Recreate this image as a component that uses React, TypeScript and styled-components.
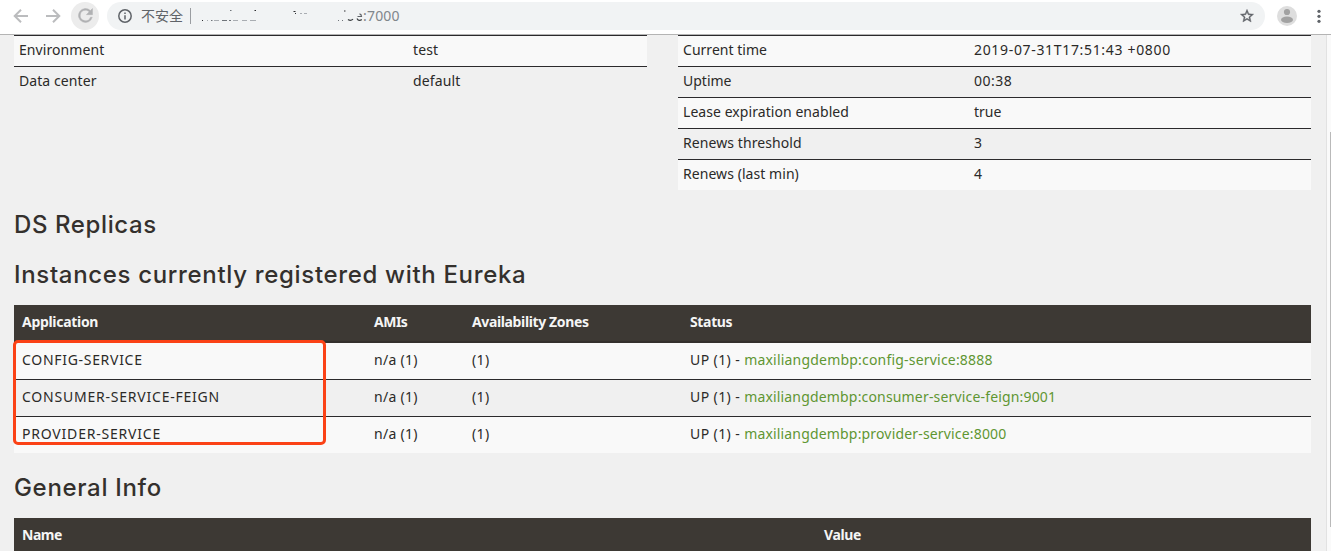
import React from "react";
import styled, { createGlobalStyle } from "styled-components";

const Global = createGlobalStyle`
  * { box-sizing: border-box; }
  body { margin: 0; background: #f0f0f0; overflow: hidden; }
`;

const Page = styled.div`
  height: 551px;
  display: flex;
  flex-direction: column;
  overflow: hidden;
  background: #f0f0f0;
  color: #2b2a28;
  font: 14px/20px "Noto Sans", "Open Sans", sans-serif;
`;

const Toolbar = styled.header`
  flex: none;
  height: 35px;
  display: flex;
  align-items: center;
  padding: 0 0 3px 12px;
  background: #fff;
  border-bottom: 1px solid #b4b4b4;
`;

const NavIcon = styled.svg`
  flex: none;
  width: 18px;
  height: 18px;
  margin-right: 14px;
`;

const ReloadButton = styled.button`
  flex: none;
  width: 28px;
  height: 28px;
  margin: 0 8px 0 -5px;
  padding: 0;
  display: grid;
  place-items: center;
  border: 0;
  border-radius: 50%;
  background: #ececec;
`;

const AddressBar = styled.div`
  flex: none;
  width: 1158px;
  height: 28px;
  display: flex;
  align-items: center;
  padding: 0 10px;
  border-radius: 14px;
  background: #f1f3f4;
  color: #5f6368;
  font: 14px/28px "Noto Sans", "Noto Sans CJK SC", sans-serif;
`;

const Security = styled.span`
  margin: 0 7px 0 8px;
`;

const Divider = styled.i`
  width: 1px;
  height: 16px;
  background: #9a9da1;
`;

const Residue = styled.svg`
  width: 162px;
  height: 16px;
  margin-left: 10px;
`;

const Port = styled.span`
  flex: 1;
  color: #80868b;
  letter-spacing: 0.2px;
`;

const Avatar = styled.svg`
  flex: none;
  width: 20px;
  height: 20px;
  margin-left: 12px;
`;

const MenuDots = styled.svg`
  flex: none;
  width: 4px;
  height: 16px;
  margin-left: 20px;
`;

const Body = styled.div`
  flex: 1;
  min-height: 0;
  display: flex;
`;

const Content = styled.main`
  flex: none;
  width: 1327px;
  padding: 0 15px 0 14px;
  border-right: 1px solid #e2e2e2;
`;

const ScrollTrack = styled.aside`
  flex: 1;
  display: flex;
  justify-content: flex-end;
  padding-top: 97px;
  background: #fafafa;
`;

const ScrollThumb = styled.div`
  width: 1px;
  height: 395px;
  background: #b9b9b9;
`;

const StatusGrid = styled.section`
  display: grid;
  grid-template-columns: 633px 633px;
  column-gap: 31px;
  align-items: start;
  height: 155px;
`;

const StatusRow = styled.div<{ $label: number }>`
  display: grid;
  grid-template-columns: ${(p) => p.$label}px 1fr;
  height: 31px;
  padding: 4px 5px;
  border-top: 1px solid #2b2a2c;
  &:nth-child(odd) { background: #f9f9f9; }
`;

const Title = styled.h1<{ $track?: number }>`
  margin: 0;
  height: 30px;
  font: 500 24px/30px Inter, sans-serif;
  letter-spacing: ${(p) => p.$track ?? 0.67}px;
  color: #34302d;
  white-space: nowrap;
`;

const Headings = styled.section`
  display: grid;
  gap: 20px;
  padding: 20px 0 15px;
`;

const GeneralHeading = styled.section`
  padding: 20px 0 15px;
`;

const Text = styled.span<{ $track?: number }>`
  letter-spacing: ${(p) => p.$track ?? 0}px;
  white-space: nowrap;
`;

const Instances = styled.section`
  position: relative;
  height: 148px;
`;

const HeadRow = styled.div<{ $cols: string }>`
  display: grid;
  grid-template-columns: ${(p) => p.$cols};
  height: 38px;
  padding: 7px 8px;
  border-bottom: 2px solid #34302d;
  background: #3d3934;
  color: #f5f5f5;
  font-weight: 700;
`;

const InstanceRow = styled.div`
  display: grid;
  grid-template-columns: 352px 98px 218px 1fr;
  height: 37px;
  padding: 7px 8px;
  border-bottom: 1px solid #2b2a2c;
  background: #f9f9f9;
  &:nth-child(odd) { background: #f0f0f0; }
  &:last-of-type { border-bottom: 0; height: 36px; }
`;

const Link = styled.a<{ $track?: number }>`
  color: #5f9632;
  letter-spacing: ${(p) => p.$track ?? 0}px;
`;

const Highlight = styled.i`
  position: absolute;
  left: -1px;
  top: 35px;
  width: 313px;
  height: 105px;
  border: 3px solid #fb4216;
  border-radius: 5px;
`;

type Item = { label: string; value: string; lt?: number; vt?: number };

const environment: Item[] = [
  { label: "Environment", value: "test", lt: 0.08, vt: 0.15 },
  { label: "Data center", value: "default", lt: 0.08, vt: 0.15 },
];

const runtime: Item[] = [
  { label: "Current time", value: "2019-07-31T17:51:43 +0800", lt: 0.03, vt: 0.67 },
  { label: "Uptime", value: "00:38", vt: 0.5 },
  { label: "Lease expiration enabled", value: "true", lt: 0.06 },
  { label: "Renews threshold", value: "3", lt: 0.08 },
  { label: "Renews (last min)", value: "4", lt: 0.06 },
];

const instances = [
  { name: "CONFIG-SERVICE", link: "maxiliangdembp:config-service:8888", nt: 0.7, lt: 0.2 },
  { name: "CONSUMER-SERVICE-FEIGN", link: "maxiliangdembp:consumer-service-feign:9001", nt: 0.78, lt: 0.17 },
  { name: "PROVIDER-SERVICE", link: "maxiliangdembp:provider-service:8000", nt: 0.8, lt: 0.17 },
];

function StatusTable({ items, label }: { items: Item[]; label: number }) {
  return (
    <div>
      {items.map((i) => (
        <StatusRow key={i.label} $label={label}>
          <Text $track={i.lt}>{i.label}</Text>
          <Text $track={i.vt}>{i.value}</Text>
        </StatusRow>
      ))}
    </div>
  );
}

function BrowserBar() {
  return (
    <Toolbar>
      <NavIcon viewBox="0 0 18 18" fill="none" stroke="#bbbcbe" strokeWidth="2">
        <path d="M16 9H3.5M9 2.7L2.7 9 9 15.3" />
      </NavIcon>
      <NavIcon viewBox="0 0 18 18" fill="none" stroke="#bbbcbe" strokeWidth="2">
        <path d="M2 9h12.5M9 2.7L15.3 9 9 15.3" />
      </NavIcon>
      <ReloadButton aria-label="Reload">
        <svg width="21" height="21" viewBox="0 0 24 24" fill="#b0b1b3" stroke="#b0b1b3" strokeWidth="0.5">
          <path d="M17.65 6.35A8 8 0 1 0 19.73 14h-2.08A6 6 0 1 1 12 6c1.66 0 3.14.69 4.22 1.78L13 11h7V4z" />
        </svg>
      </ReloadButton>
      <AddressBar>
        <svg width="16" height="16" viewBox="0 0 16 16" fill="none" stroke="#5f6368" strokeWidth="1.5">
          <circle cx="8" cy="8" r="6.2" />
          <path d="M8 7.2v4.2M8 4.4v1.6" />
        </svg>
        <Security>不安全</Security>
        <Divider />
        <Residue viewBox="201 8 162 16" fill="none" stroke="#a9adb2">
          <path d="M207 20.5h1M214 20.5h5M233 20.5h5M242 20.5h5M250 20.5h6M300 13.5h2M304 13.5h3" />
          <path stroke="#6f747a" d="M211 20.5h1.500M222 20.5h5M229 20.5h2M230 10.500h1.500M338 20.5h1M342 20.5h1" />
          <path stroke="#2c2d30" d="M202 20.5h1M254.500 10.500h1.500M293.500 11.500h2M344 11h1.500M295 13.500h1" />
          <path stroke="#3c4043" strokeWidth="1.200" d="M348 19.500c1.500 1.200 3.500 1.200 5-.3M357 18.500c.8 2 3 2.500 4.800 1" />
          <path stroke="#5f6368" strokeWidth="1.200" d="M357.500 16.500h4c0-1.500-.8-2.500-2-2.700" />
        </Residue>
        <Port>:7000</Port>
        <svg width="16" height="16" viewBox="0 0 24 24" fill="#5f6368" stroke="#5f6368" strokeWidth="0.6">
          <path d="M22 9.24l-7.19-.62L12 2 9.19 8.63 2 9.24l5.46 4.73L5.82 21 12 17.27 18.18 21l-1.63-7.03L22 9.24zM12 15.4l-3.76 2.27 1-4.28-3.32-2.88 4.38-.38L12 6.1l1.71 4.04 4.38.38-3.32 2.88 1 4.28L12 15.4z" />
        </svg>
      </AddressBar>
      <Avatar viewBox="0 0 20 20">
        <circle cx="10" cy="10" r="10" fill="#dedede" />
        <circle cx="10" cy="6" r="3.100" fill="#a2a2a2" />
        <ellipse cx="10" cy="13.800" rx="6" ry="3.200" fill="#a2a2a2" />
      </Avatar>
      <MenuDots viewBox="0 0 4 16" fill="#5f6368">
        <circle cx="2" cy="3.300" r="1.600" />
        <circle cx="2" cy="8.300" r="1.600" />
        <circle cx="2" cy="13.300" r="1.600" />
      </MenuDots>
    </Toolbar>
  );
}

export default function App() {
  return (
    <Page>
      <Global />
      <BrowserBar />
      <Body>
        <Content>
          <StatusGrid>
            <StatusTable items={environment} label={394} />
            <StatusTable items={runtime} label={291} />
          </StatusGrid>
          <Headings>
            <Title $track={0.6}>DS Replicas</Title>
            <Title>Instances currently registered with Eureka</Title>
          </Headings>
          <Instances>
            <HeadRow $cols="352px 98px 218px 1fr">
              <Text $track={-0.3}>Application</Text>
              <Text $track={-0.5}>AMIs</Text>
              <Text $track={-0.37}>Availability Zones</Text>
              <Text $track={-0.35}>Status</Text>
            </HeadRow>
            {instances.map((i) => (
              <InstanceRow key={i.name}>
                <Text $track={i.nt}>{i.name}</Text>
                <Text $track={0.3}>n/a (1)</Text>
                <Text $track={0.4}>(1)</Text>
                <Text $track={0.4}>UP (1) - <Link $track={i.lt}>{i.link}</Link></Text>
              </InstanceRow>
            ))}
            <Highlight />
          </Instances>
          <GeneralHeading>
            <Title>General Info</Title>
          </GeneralHeading>
          <HeadRow $cols="802px 1fr">
            <Text $track={-0.5}>Name</Text>
            <Text $track={-0.4}>Value</Text>
          </HeadRow>
        </Content>
        <ScrollTrack><ScrollThumb /></ScrollTrack>
      </Body>
    </Page>
  );
}
